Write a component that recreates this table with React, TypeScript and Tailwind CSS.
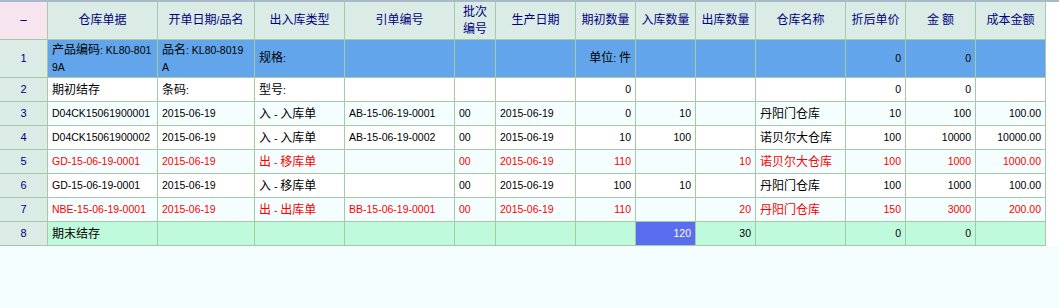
import type { ReactNode } from "react";

const COLS =
  "grid grid-cols-[48px_110px_97px_90px_110px_41px_80px_60px_60px_60px_90px_60px_70px_70px] w-[1046px]";

const headers = [
  "仓库单据",
  "开单日期/品名",
  "出入库类型",
  "引单编号",
  "批次\n编号",
  "生产日期",
  "期初数量",
  "入库数量",
  "出库数量",
  "仓库名称",
  "折后单价",
  "金 额",
  "成本金额",
];

// which data columns are right aligned (numbers)
const rightCols = [6, 7, 8, 10, 11, 12];

type Row = {
  cells: string[];
  bg: string;
  red?: boolean;
  tall?: boolean;
};

const rows: Row[] = [
  {
    cells: ["产品编码: KL80-801\n9A", "品名: KL80-8019\nA", "规格:", "", "", "", "单位: 件", "", "", "", "0", "0", ""],
    bg: "bg-[#62a5eb]",
    tall: true,
  },
  {
    cells: ["期初结存", "条码:", "型号:", "", "", "", "0", "", "", "", "0", "0", ""],
    bg: "bg-white",
  },
  {
    cells: ["D04CK15061900001", "2015-06-19", "入 - 入库单", "AB-15-06-19-0001", "00", "2015-06-19", "0", "10", "", "丹阳门仓库", "10", "100", "100.00"],
    bg: "bg-[#f5fefe]",
  },
  {
    cells: ["D04CK15061900002", "2015-06-19", "入 - 入库单", "AB-15-06-19-0002", "00", "2015-06-19", "10", "100", "", "诺贝尔大仓库", "100", "10000", "10000.00"],
    bg: "bg-white",
  },
  {
    cells: ["GD-15-06-19-0001", "2015-06-19", "出 - 移库单", "", "00", "2015-06-19", "110", "", "10", "诺贝尔大仓库", "100", "1000", "1000.00"],
    bg: "bg-[#f5fefe]",
    red: true,
  },
  {
    cells: ["GD-15-06-19-0001", "2015-06-19", "入 - 移库单", "", "00", "2015-06-19", "100", "10", "", "丹阳门仓库", "100", "1000", "100.00"],
    bg: "bg-white",
  },
  {
    cells: ["NBE-15-06-19-0001", "2015-06-19", "出 - 出库单", "BB-15-06-19-0001", "00", "2015-06-19", "110", "", "20", "丹阳门仓库", "150", "3000", "200.00"],
    bg: "bg-[#f5fefe]",
    red: true,
  },
  {
    cells: ["期末结存", "", "", "", "", "", "", "120", "30", "", "0", "0", ""],
    bg: "bg-[#c0fadc]",
  },
];

// chinese runs are a size bigger than the latin ones in the source page
function Line({ s }: { s: string }) {
  const parts = s.split(/([\u3400-\u9fff]+)/);
  return (
    <span className="block whitespace-pre">
      {parts.map((p, i) =>
        /[\u3400-\u9fff]/.test(p) ? (
          <span key={i} className="text-[12px]">
            {p}
          </span>
        ) : (
          p
        )
      )}
    </span>
  );
}

function Txt({ s }: { s: string }) {
  return (
    <div>
      {s.split("\n").map((l, i) => (
        <Line key={i} s={l} />
      ))}
    </div>
  );
}

function Cell({ children, className = "" }: { children?: ReactNode; className?: string }) {
  return (
    <div className={`flex items-center border-r border-b border-[#a6caa6] px-[4px] ${className}`}>
      {children}
    </div>
  );
}

export default function App() {
  return (
    <div className="min-h-[308px] w-full bg-[#f5fefe] font-['Liberation_Sans','Noto_Sans_CJK_SC',sans-serif] text-[10.5px]">
      <div className="h-[2px] w-full bg-[#a8b9ca]" />
      <div className="w-full bg-white">
        <div className={COLS}>
          {/* header */}
          <Cell className="h-[38px] justify-center bg-[#f6e4ee] text-[#000080] text-[13px]">−</Cell>
          {headers.map((h) => (
            <Cell
              key={h}
              className="h-[38px] justify-center bg-[#dbebe5] text-center leading-[17px] text-[#000080]"
            >
              <Txt s={h} />
            </Cell>
          ))}

          {rows.map((row, r) => (
            <div key={r} className="contents">
              <Cell
                className={`${row.tall ? "h-[38px]" : "h-[24px]"} justify-center bg-[#dbebe5] text-[11px] text-[#000080]`}
              >
                {r + 1}
              </Cell>
              {row.cells.map((c, i) => {
                const blue = r === 7 && i === 7;
                return (
                  <Cell
                    key={i}
                    className={[
                      row.tall ? "h-[38px] leading-[17px]" : "h-[24px]",
                      rightCols.includes(i) ? "justify-end text-right" : "justify-start",
                      blue ? "bg-[#5a6cf0] text-white" : row.bg,
                      !blue && row.red ? "text-[#ff0000]" : "",
                      !blue && !row.red ? "text-black" : "",
                    ].join(" ")}
                  >
                    <Txt s={c} />
                  </Cell>
                );
              })}
            </div>
          ))}
        </div>
      </div>
    </div>
  );
}
